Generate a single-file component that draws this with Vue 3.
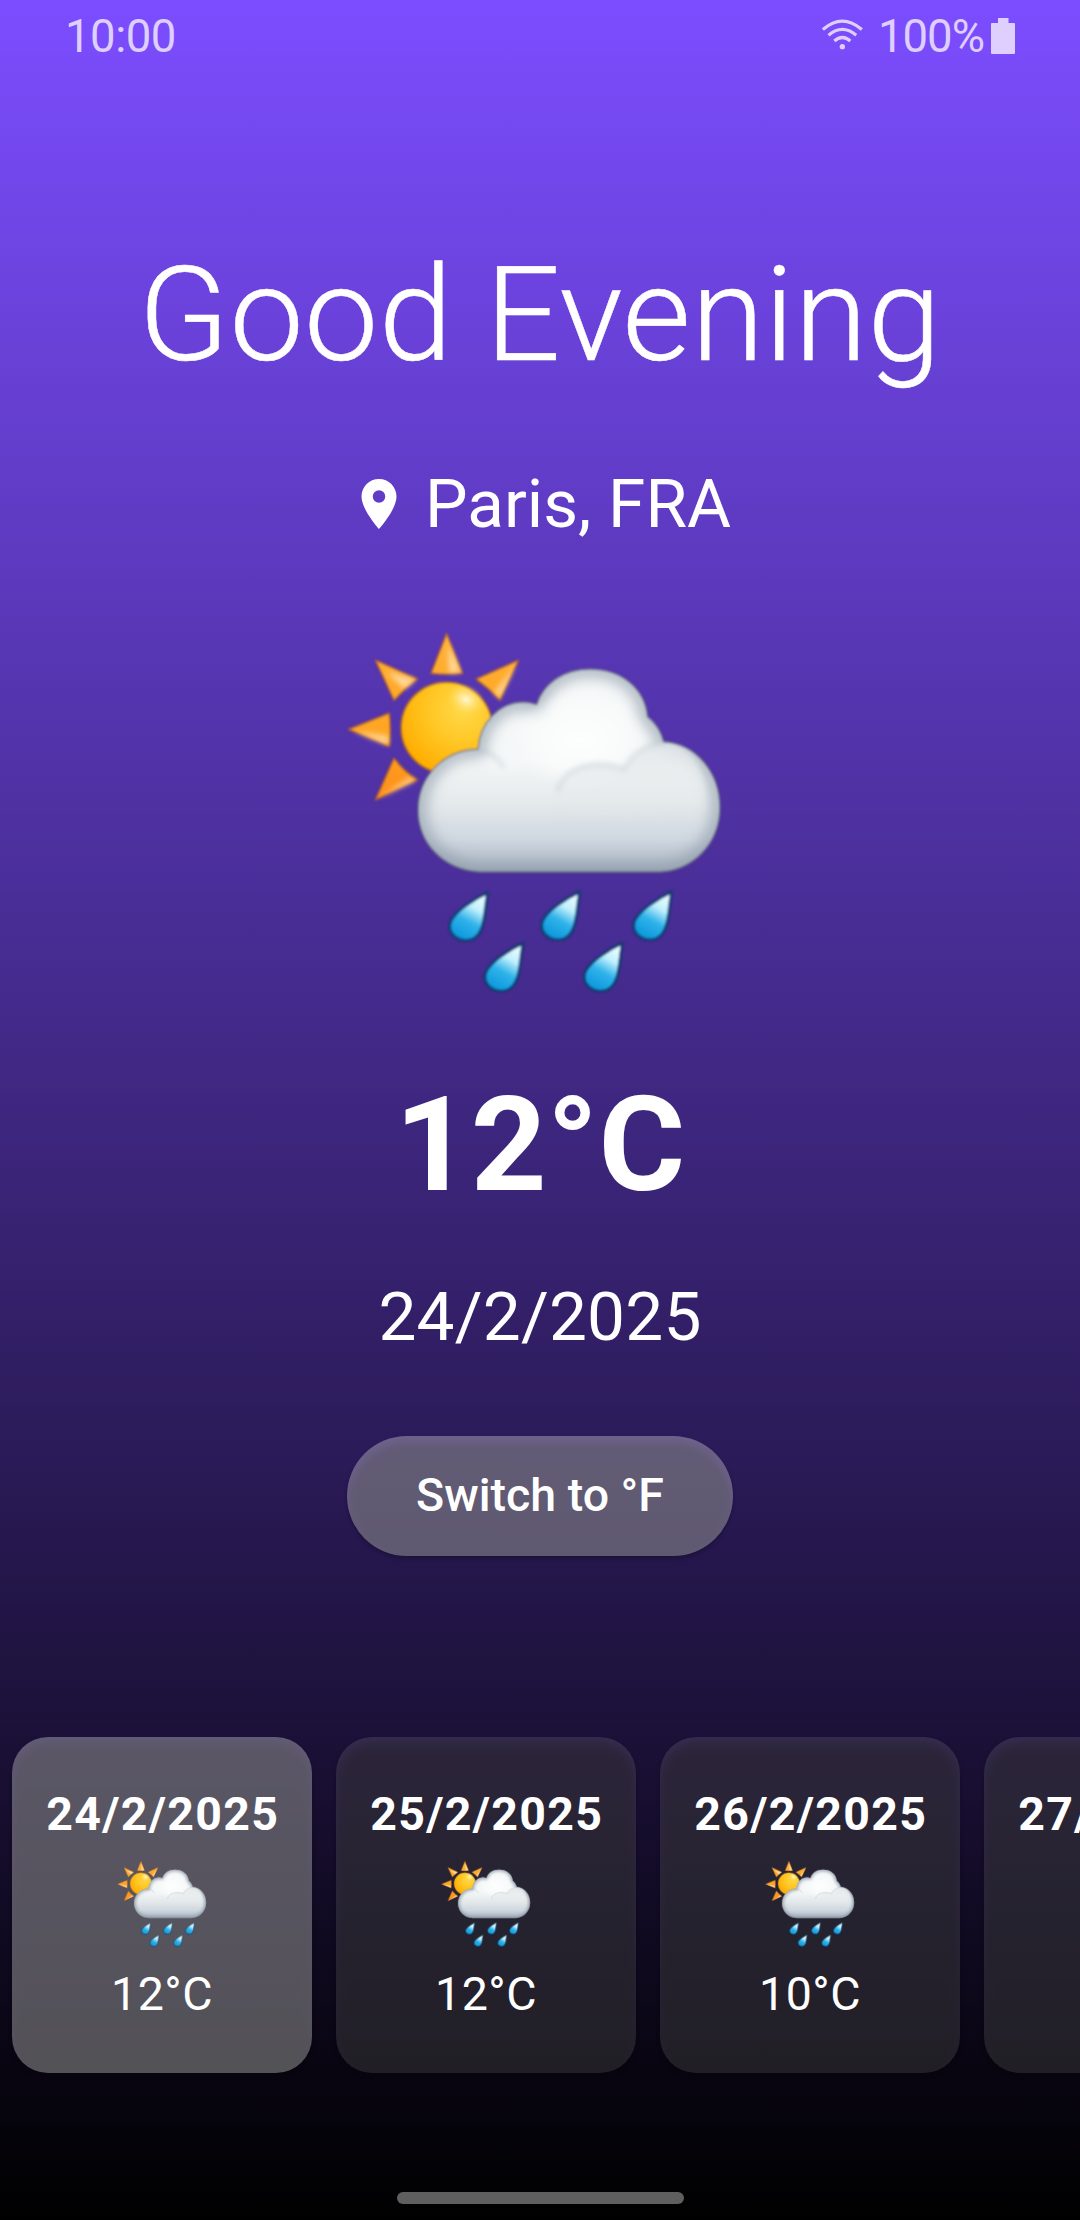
<script setup>
import { h } from 'vue'

const days = [
  { date: '24/2/2025', temp: '12°C', selected: true },
  { date: '25/2/2025', temp: '12°C' },
  { date: '26/2/2025', temp: '10°C' },
  { date: '27/2/2025', temp: '' },
]

const stop = (offset, color, opacity = 1) =>
  h('stop', { offset, 'stop-color': color, 'stop-opacity': opacity })

const rays = [
  'M350 70 L398 190 Q350 196 303 190 Z',
  'M566 150 L510 271 Q478 236 438 207 Z',
  'M136 150 L263 207 Q224 236 192 271 Z',
  'M55 358 L178 309 Q184 360 178 410 Z',
  'M136 570 L192 444 Q222 484 263 510 Z',
]
const rayLights = [
  'M354 100 L390 186 L358 188 Z',
  'M560 160 L508 262 L494 248 Z',
  'M170 186 L256 209 L224 236 Z',
  'M72 363 L174 378 L174 404 Z',
  'M146 564 L240 502 L256 511 Z',
]
const drops = [[416, 920], [692, 918], [968, 918], [522, 1072], [820, 1072]]
const cloud =
  'M450 786 C340 780 264 700 264 600 C264 500 340 420 444 417 C450 335 510 276 580 276 C596 276 608 279 620 283 C640 220 700 177 780 177 C875 177 945 235 953 320 C978 340 994 365 1001 395 C1100 400 1170 490 1170 592 C1170 700 1090 782 990 786 Z'

let uid = 0
const WeatherIcon = {
  setup() {
    const id = `w${uid++}`
    const u = (n) => `url(#${id}${n})`
    return () =>
      h('svg', { viewBox: '0 0 1230 1200', 'aria-hidden': 'true' }, [
        h('defs', [
          h('radialGradient', { id: id + 'sun', cx: 0.68, cy: 0.3, r: 0.75 }, [
            stop(0, '#ffd94a'), stop(0.45, '#ffc928'), stop(1, '#ffad00'),
          ]),
          h('radialGradient', { id: id + 'glow' }, [
            stop(0, '#fffbe4', 0.95), stop(1, '#ffe36e', 0),
          ]),
          h('linearGradient', { id: id + 'ray', gradientUnits: 'userSpaceOnUse', x1: 0, y1: 70, x2: 0, y2: 570 }, [
            stop(0, '#ffb136'), stop(0.6, '#ffa522'), stop(1, '#ff8f18'),
          ]),
          h('linearGradient', { id: id + 'cloud', x1: 0, y1: 0, x2: 0, y2: 1 }, [
            stop(0, '#f8fafa'), stop(0.45, '#f5f8f8'), stop(0.68, '#e3e8ea'),
            stop(0.84, '#cfd7e0'), stop(1, '#aab5c0'),
          ]),
          h('radialGradient', { id: id + 'white' }, [
            stop(0, '#fdfffe', 1), stop(0.55, '#fbfdfc', 0.8), stop(1, '#fbfdfc', 0),
          ]),
          h('linearGradient', { id: id + 'puff', x1: 0, y1: 0, x2: 0, y2: 1 }, [
            stop(0, '#e2e7ea'), stop(0.45, '#e7ebed', 0.8), stop(1, '#e3e8ea', 0),
          ]),
          h('linearGradient', { id: id + 'drop', x1: 0.75, y1: 0.05, x2: 0.35, y2: 0.95 }, [
            stop(0, '#eafcff'), stop(0.3, '#c2f1fd'), stop(0.62, '#30b3ea'), stop(1, '#109ade'),
          ]),
          h('filter', { id: id + 'b', x: '-20%', y: '-20%', width: '140%', height: '140%' }, [
            h('feGaussianBlur', { stdDeviation: 22 }),
          ]),
          h('filter', { id: id + 's', x: '-20%', y: '-20%', width: '140%', height: '140%' }, [
            h('feGaussianBlur', { stdDeviation: 8 }),
          ]),
          h('filter', { id: id + 'e', x: '-5%', y: '-5%', width: '110%', height: '110%' }, [
            h('feGaussianBlur', { stdDeviation: 2.5 }),
          ]),
          h('clipPath', { id: id + 'clip' }, [h('path', { d: cloud })]),
        ]),
        h('g', { filter: u('e') }, [
          h('g', { fill: u('ray'), stroke: '#a85a30', 'stroke-opacity': 0.65, 'stroke-width': 6, 'stroke-linejoin': 'round' },
            rays.map((d) => h('path', { d }))),
          h('g', { fill: '#ffe9c4', 'fill-opacity': 0.75, filter: u('s') }, rayLights.map((d) => h('path', { d }))),
          h('circle', { cx: 350, cy: 353, r: 137, fill: u('sun'), stroke: '#a8602c', 'stroke-opacity': 0.7, 'stroke-width': 6 }),
          h('ellipse', { cx: 408, cy: 268, rx: 58, ry: 44, fill: u('glow'), transform: 'rotate(25 408 268)' }),
          h('path', { d: cloud, fill: u('cloud') }),
          h('g', { 'clip-path': u('clip') }, [
            h('path', { d: cloud, fill: 'none', stroke: '#8494a4', 'stroke-opacity': 0.7, 'stroke-width': 46, filter: u('b') }),
            h('ellipse', { cx: 750, cy: 390, rx: 200, ry: 150, fill: u('white') }),
            h('path', { d: 'M680 550 C700 470 790 440 882 476 C910 425 960 400 1010 396 C1090 410 1130 480 1130 600 L680 640 Z', fill: u('puff'), filter: u('s'), opacity: 0.85 }),
            h('path', { d: 'M682 545 C700 470 800 445 882 478 C905 430 950 402 1004 397', fill: 'none', stroke: '#a3afba', 'stroke-opacity': 0.28, 'stroke-width': 13, filter: u('s') }),
            h('path', { d: 'M440 420 C475 422 502 442 522 472', fill: 'none', stroke: '#a3afba', 'stroke-opacity': 0.3, 'stroke-width': 13, filter: u('s') }),
          ]),
          h('path', { d: cloud, fill: 'none', stroke: '#59616f', 'stroke-opacity': 0.6, 'stroke-width': 5 }),
          h('g', { fill: u('drop'), stroke: '#0d3f70', 'stroke-width': 8, 'stroke-linejoin': 'round' },
            drops.map(([x, y]) =>
              h('path', {
                d: 'M57 -72 C25 -58 -57 -10 -57 29 C-57 53 -35 71 -8 71 C18 71 32 54 40 30 C50 0 50 -40 57 -72 Z',
                transform: `translate(${x} ${y})`,
              }))),
        ]),
      ])
  },
}
</script>

<template>
  <div class="screen">
    <header class="status">
      <span class="clock">10:00</span>
      <svg class="wifi" viewBox="120 50 128 102" fill="none" stroke="currentColor" stroke-width="9.5">
        <path d="M125.500 87.500Q184 37 242.500 87.500M142.500 104.500Q184 69.500 225.500 104.500M160 122Q184 101 208 122" />
        <circle cx="184" cy="139" r="8" fill="currentColor" stroke="none" />
      </svg>
      <span class="percent">100%</span>
      <svg class="battery" viewBox="0 0 24 36" fill="currentColor">
        <path d="M7 0H17.500V5H23Q24 5 24 6V35Q24 36 23 36H1Q0 36 0 35V6Q0 5 1 5H7Z" />
      </svg>
    </header>

    <h1 class="greeting">Good Evening</h1>
    <div class="place">
      <svg class="pin" viewBox="0 0 24 24" fill="currentColor">
        <path d="M12 2C8.130 2 5 5.130 5 9c0 5.250 7 13 7 13s7-7.750 7-13c0-3.870-3.130-7-7-7zm0 9.500a2.500 2.500 0 0 1 0-5 2.500 2.500 0 0 1 0 5z" />
      </svg>
      <span>Paris, FRA</span>
    </div>
    <WeatherIcon class="hero" />
    <div class="temp">12°C</div>
    <div class="date">24/2/2025</div>
    <button class="switch surface strong"><span>Switch to °F</span></button>

    <div class="days">
      <article v-for="d in days" :key="d.date" class="day surface" :class="{ strong: d.selected }">
        <b>{{ d.date }}</b>
        <WeatherIcon class="mini" />
        <span>{{ d.temp }}</span>
      </article>
    </div>
    <div class="home"></div>
  </div>
</template>

<style>
body {
  margin: 0;
}
</style>

<style scoped>
.screen {
  width: 1080px;
  height: 2220px;
  overflow: hidden;
  display: flex;
  flex-direction: column;
  align-items: center;
  background: linear-gradient(#7c4dff, #000);
  color: #fff;
  font-family: Roboto, sans-serif;
}
.status {
  width: 1080px;
  height: 72px;
  flex: none;
  display: flex;
  align-items: flex-start;
  box-sizing: border-box;
  padding: 10px 65px 0 65px;
  color: #decfff;
  font-size: 45.500px;
  letter-spacing: -1px;
  line-height: 54px;
}
.clock {
  margin-right: auto;
  letter-spacing: -0.500px;
}
.wifi {
  width: 42.700px;
  height: 34px;
  margin: 7px 14px 0 0;
}
.percent {
  margin-right: 7px;
}
.battery {
  width: 24px;
  height: 36px;
  margin-top: 8px;
}
.greeting {
  margin: 163px 0 0;
  flex: none;
  font-size: 132.500px;
  font-weight: 300;
  letter-spacing: 0.300px;
  line-height: 160px;
  white-space: nowrap;
  -webkit-text-stroke: 0.500px #fff;
}
.place {
  flex: none;
  display: flex;
  align-items: center;
  gap: 16px;
  height: 80px;
  margin-top: 69px;
  font-size: 67.500px;
  line-height: 80px;
}
.pin {
  width: 60px;
  height: 60px;
}
.hero {
  flex: none;
  width: 410px;
  height: 400px;
  margin: 66px 10px 0 0;
}
.temp {
  flex: none;
  margin-top: 55px;
  font-size: 132.500px;
  font-weight: 700;
  line-height: 160px;
}
.date {
  flex: none;
  margin-top: 52px;
  font-size: 67.500px;
  letter-spacing: 0.200px;
  line-height: 80px;
}
.surface {
  position: relative;
  isolation: isolate;
  overflow: hidden;
  box-shadow: 0 3px 4px rgba(0, 0, 0, 0.22);
}
.surface::before {
  content: '';
  position: absolute;
  z-index: -2;
  inset: 6px 1px -5px;
  border-radius: inherit;
  background: rgba(0, 0, 0, 0.38);
  filter: blur(4px);
}
.surface::after {
  content: '';
  position: absolute;
  z-index: -1;
  inset: 0;
  background: rgba(255, 255, 255, 0.115);
}
.strong::after {
  background: rgba(255, 255, 255, 0.315);
}
.switch {
  flex: none;
  width: 386px;
  height: 120px;
  margin-top: 78.500px;
  padding: 0 0 2px;
  border: 0;
  border-radius: 60px;
  background: none;
  color: #fff;
  font: 500 46.500px/54px Roboto, sans-serif;
}
.days {
  flex: none;
  display: flex;
  align-self: stretch;
  gap: 24px;
  margin-top: 181.500px;
  padding-left: 12px;
}
.day {
  flex: none;
  box-sizing: border-box;
  width: 300px;
  height: 336px;
  padding-top: 50px;
  border-radius: 36px;
  display: flex;
  flex-direction: column;
  align-items: center;
  font-size: 46.500px;
  letter-spacing: 0.500px;
  line-height: 54px;
}
.day b {
  padding-left: 1.400px;
  letter-spacing: 1.300px;
}
.mini {
  width: 97.800px;
  height: 96.400px;
  margin: 14px 1px 16px 0;
}
.home {
  flex: none;
  width: 287px;
  height: 12px;
  margin-top: 118.500px;
  border-radius: 6px;
  background: #5f5f5f;
}
</style>
